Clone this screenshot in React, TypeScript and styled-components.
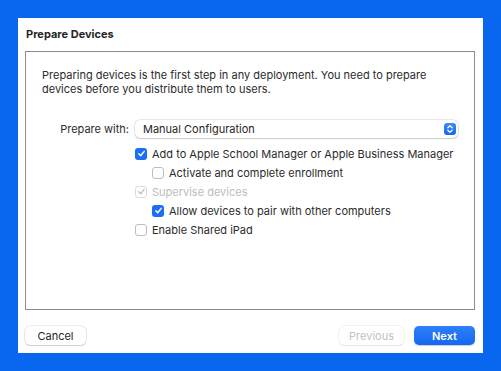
import styled, { createGlobalStyle } from 'styled-components';

const GlobalStyle = createGlobalStyle`
  html, body {
    margin: 0;
    padding: 0;
    background: #0866ef;
  }
  body {
    width: 501px;
    height: 371px;
    overflow: hidden;
    font-family: Inter, "Liberation Sans", sans-serif;
    -webkit-font-smoothing: antialiased;
  }
`;

const Stage = styled.div`
  padding: 18px;
`;

const Sheet = styled.div`
  width: 465px;
  height: 335px;
  box-sizing: border-box;
  background: #ffffff;
  padding: 8px 8px 0 7px;
  display: flex;
  flex-direction: column;
`;

const Title = styled.h1`
  margin: 0 0 9px 1px;
  font-size: 11px;
  font-weight: 700;
  color: #262626;
  line-height: 16px;
  height: 16px;
`;

const ContentBox = styled.div`
  height: 259px;
  border: 1px solid #8c8c8c;
  box-sizing: border-box;
  padding: 16px 16px 0 16px;
`;

const Description = styled.p`
  margin: 0;
  font-size: 11px;
  line-height: 14px;
  color: #2b2b2b;
`;

const Form = styled.div`
  margin-top: 24px;
  display: grid;
  grid-template-columns: 87px 1fr;
  column-gap: 6px;
  align-items: center;
`;

const Label = styled.div`
  font-size: 11px;
  color: #2b2b2b;
  text-align: right;
`;

const Popup = styled.div`
  height: 18px;
  border-radius: 5px;
  background: #fff;
  box-shadow: 0 0 0 0.5px rgba(0, 0, 0, 0.18), 0 1px 1.5px rgba(0, 0, 0, 0.12);
  display: flex;
  align-items: center;
  justify-content: space-between;
  padding: 0 2px 0 8px;
  font-size: 11px;
  color: #262626;
`;

const Stepper = styled.div`
  width: 12px;
  height: 12px;
  border-radius: 3px;
  background: linear-gradient(#3d8bfd, #1468f0);
  display: flex;
  align-items: center;
  justify-content: center;
`;

const Options = styled.div`
  grid-column: 2;
  display: flex;
  flex-direction: column;
  padding-top: 6px;
`;

const OptionRow = styled.label<{ $indent?: boolean; $disabled?: boolean }>`
  display: flex;
  align-items: center;
  height: 19px;
  gap: 5px;
  padding-left: ${({ $indent }) => ($indent ? '17px' : '0')};
  font-size: 11px;
  color: ${({ $disabled }) => ($disabled ? '#bdbdbd' : '#2b2b2b')};
`;

const Box = styled.span<{ $checked?: boolean; $disabled?: boolean }>`
  width: 12px;
  height: 12px;
  box-sizing: border-box;
  border-radius: 3px;
  flex: none;
  display: flex;
  align-items: center;
  justify-content: center;
  ${({ $checked, $disabled }) =>
    $checked && !$disabled
      ? `background: #1a6ff4; border: none;`
      : `background: #fff; border: 1px solid ${$disabled ? '#dcdcdc' : '#bdbdbd'};`}
`;

const Footer = styled.div`
  display: flex;
  align-items: center;
  margin-top: 16px;
  gap: 10px;
`;

const Spacer = styled.div`
  flex: 1;
`;

const Button = styled.button<{ $primary?: boolean }>`
  height: 19px;
  width: 61px;
  border: none;
  border-radius: 5px;
  font-family: inherit;
  font-size: 11px;
  padding: 0;
  background: ${({ $primary }) =>
    $primary ? 'linear-gradient(#2f7ff8, #1467f2)' : '#fff'};
  color: ${({ $primary }) => ($primary ? '#fff' : '#262626')};
  font-weight: ${({ $primary }) => ($primary ? 600 : 400)};
  box-shadow: ${({ $primary }) =>
    $primary
      ? '0 0.5px 1px rgba(0,0,0,0.2)'
      : '0 0 0 0.5px rgba(0,0,0,0.15), 0 1px 1.5px rgba(0,0,0,0.12)'};
  &:disabled {
    color: #c2c2c2;
    width: 65px;
    box-shadow: 0 0 0 0.5px rgba(0, 0, 0, 0.1), 0 1px 1px rgba(0, 0, 0, 0.05);
  }
`;

function Check({ color = '#fff' }: { color?: string }) {
  return (
    <svg width="9" height="9" viewBox="0 0 10 10">
      <path
        d="M2 5.3 L4.1 7.5 L8 2.6"
        fill="none"
        stroke={color}
        strokeWidth="1.6"
        strokeLinecap="round"
        strokeLinejoin="round"
      />
    </svg>
  );
}

const options = [
  { text: 'Add to Apple School Manager or Apple Business Manager', checked: true },
  { text: 'Activate and complete enrollment', indent: true },
  { text: 'Supervise devices', checked: true, disabled: true },
  { text: 'Allow devices to pair with other computers', checked: true, indent: true },
  { text: 'Enable Shared iPad' },
];

export default function App() {
  return (
    <>
      <GlobalStyle />
      <Stage>
        <Sheet>
          <Title>Prepare Devices</Title>
          <ContentBox>
            <Description>
              Preparing devices is the first step in any deployment. You need to prepare
              <br />
              devices before you distribute them to users.
            </Description>
            <Form>
              <Label>Prepare with:</Label>
              <Popup>
                Manual Configuration
                <Stepper>
                  <svg width="8" height="10" viewBox="0 0 8 10">
                    <path
                      d="M1.8 3.8 L4 1.8 L6.2 3.8 M1.8 6.2 L4 8.2 L6.2 6.2"
                      fill="none"
                      stroke="#fff"
                      strokeWidth="1.3"
                      strokeLinecap="round"
                      strokeLinejoin="round"
                    />
                  </svg>
                </Stepper>
              </Popup>
              <Options>
                {options.map((o) => (
                  <OptionRow key={o.text} $indent={o.indent} $disabled={o.disabled}>
                    <Box $checked={o.checked} $disabled={o.disabled}>
                      {o.checked && <Check color={o.disabled ? '#c4c4c4' : '#fff'} />}
                    </Box>
                    {o.text}
                  </OptionRow>
                ))}
              </Options>
            </Form>
          </ContentBox>
          <Footer>
            <Button>Cancel</Button>
            <Spacer />
            <Button disabled>Previous</Button>
            <Button $primary>Next</Button>
          </Footer>
        </Sheet>
      </Stage>
    </>
  );
}
